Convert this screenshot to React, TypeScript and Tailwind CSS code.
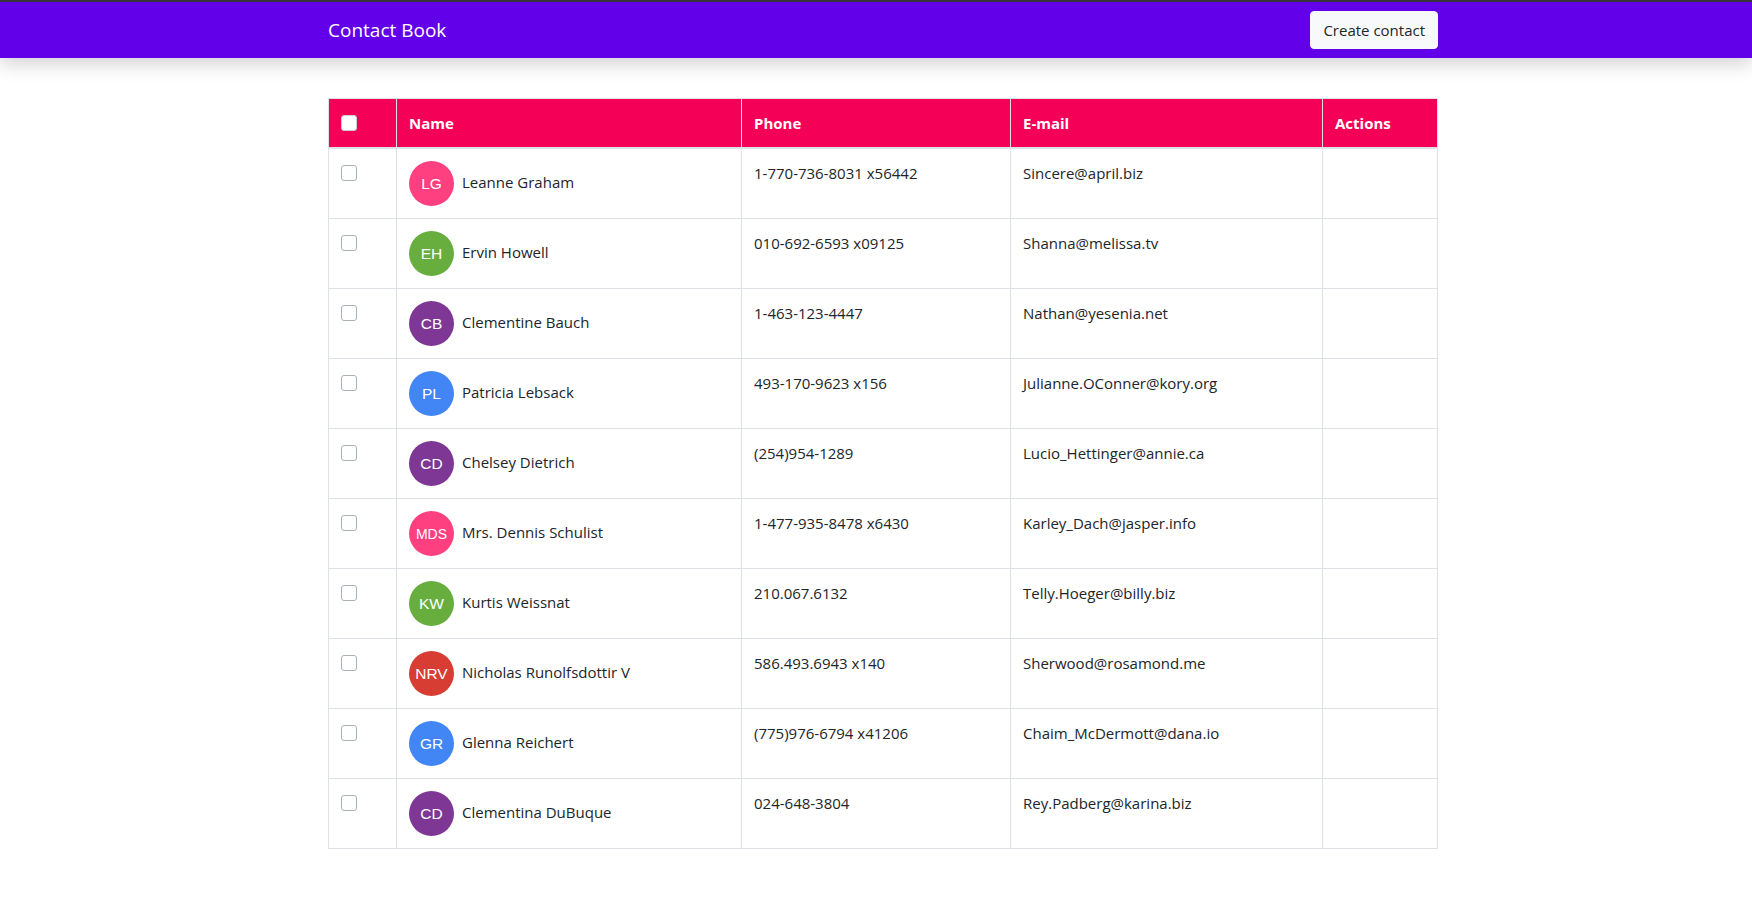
import React from "react";

type Contact = {
  name: string;
  initials: string;
  color: string;
  phone: string;
  email: string;
  small?: boolean;
};

const contacts: Contact[] = [
  { name: "Leanne Graham", initials: "LG", color: "#ff4080", phone: "1-770-736-8031 x56442", email: "Sincere@april.biz" },
  { name: "Ervin Howell", initials: "EH", color: "#67ae3f", phone: "010-692-6593 x09125", email: "Shanna@melissa.tv" },
  { name: "Clementine Bauch", initials: "CB", color: "#7e3794", phone: "1-463-123-4447", email: "Nathan@yesenia.net" },
  { name: "Patricia Lebsack", initials: "PL", color: "#4285f4", phone: "493-170-9623 x156", email: "Julianne.OConner@kory.org" },
  { name: "Chelsey Dietrich", initials: "CD", color: "#7e3794", phone: "(254)954-1289", email: "Lucio_Hettinger@annie.ca" },
  { name: "Mrs. Dennis Schulist", initials: "MDS", color: "#ff4080", phone: "1-477-935-8478 x6430", email: "Karley_Dach@jasper.info", small: true },
  { name: "Kurtis Weissnat", initials: "KW", color: "#67ae3f", phone: "210.067.6132", email: "Telly.Hoeger@billy.biz" },
  { name: "Nicholas Runolfsdottir V", initials: "NRV", color: "#d73d32", phone: "586.493.6943 x140", email: "Sherwood@rosamond.me" },
  { name: "Glenna Reichert", initials: "GR", color: "#4285f4", phone: "(775)976-6794 x41206", email: "Chaim_McDermott@dana.io" },
  { name: "Clementina DuBuque", initials: "CD", color: "#7e3794", phone: "024-648-3804", email: "Rey.Padberg@karina.biz" },
];

function Avatar({ c }: { c: Contact }) {
  return (
    <div
      className="w-[45px] h-[45px] shrink-0 rounded-full flex items-center justify-center text-white"
      style={{ backgroundColor: c.color }}
    >
      <span
        className={`font-['Liberation_Sans',Arial,sans-serif] leading-none ${c.small ? "text-[14px]" : "text-[15.5px]"}`}
      >
        {c.initials}
      </span>
    </div>
  );
}

export default function App() {
  return (
    <div className="min-h-screen bg-white font-['Open_Sans',sans-serif] text-[#212529]">
      {/* Navbar */}
      <header className="relative z-10 bg-[#6200ea] border-t-2 border-[#35353a] shadow-[0_6px_18px_rgba(0,0,0,0.18)]">
        <div className="ml-[328px] w-[1110px] h-[56px] flex items-center justify-between">
          <span className="text-white text-[19px]">Contact Book</span>
          <button className="bg-[#f8f9fa] border border-[#f8f9fa] rounded-[4px] px-3 py-[6px] text-[15px] leading-6 text-[#212529]">
            Create contact
          </button>
        </div>
      </header>

      {/* Table */}
      <div className="ml-[328px] w-[1109px] mt-10 pb-10">
        <table className="w-full table-fixed border-collapse border border-[#dee2e6] text-[15px] leading-6">
          <colgroup>
            <col className="w-[68px]" />
            <col className="w-[345px]" />
            <col className="w-[269px]" />
            <col className="w-[312px]" />
            <col className="w-[115px]" />
          </colgroup>
          <thead>
            <tr className="bg-[#f50057] text-white text-left">
              <th className="border border-[#dee2e6] border-b-2 px-3 py-3 align-middle">
                <input
                  type="checkbox"
                  className="appearance-none block w-4 h-4 rounded-[3px] bg-white border border-[#c9ced4]"
                />
              </th>
              <th className="border border-[#dee2e6] border-b-2 px-3 py-3 font-bold">Name</th>
              <th className="border border-[#dee2e6] border-b-2 px-3 py-3 font-bold">Phone</th>
              <th className="border border-[#dee2e6] border-b-2 px-3 py-3 font-bold">E-mail</th>
              <th className="border border-[#dee2e6] border-b-2 px-3 py-3 font-bold">Actions</th>
            </tr>
          </thead>
          <tbody>
            {contacts.map((c, i) => (
              <tr key={i}>
                <td className="border border-[#dee2e6] px-3 py-3 align-top">
                  <input
                    type="checkbox"
                    className="appearance-none block mt-1 w-4 h-4 rounded-[3px] bg-white border border-[#a9b0b8]"
                  />
                </td>
                <td className="border border-[#dee2e6] px-3 py-3 align-top">
                  <div className="flex items-center gap-2">
                    <Avatar c={c} />
                    <span className="mb-1">{c.name}</span>
                  </div>
                </td>
                <td className="border border-[#dee2e6] px-3 py-3 align-top">{c.phone}</td>
                <td className="border border-[#dee2e6] px-3 py-3 align-top">{c.email}</td>
                <td className="border border-[#dee2e6] px-3 py-3 align-top"></td>
              </tr>
            ))}
          </tbody>
        </table>
      </div>
    </div>
  );
}
